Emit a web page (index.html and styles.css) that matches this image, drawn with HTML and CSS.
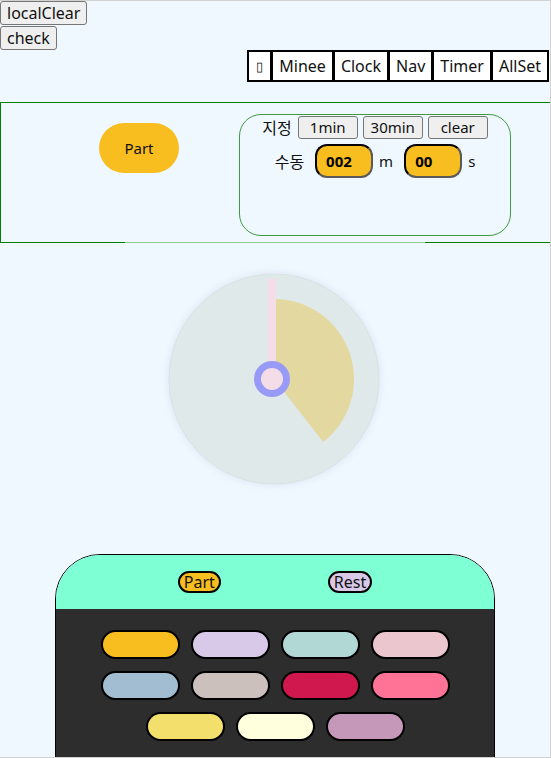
FILE: index.html
```html
<!DOCTYPE html>
<html lang="ko">
<head>
<meta charset="utf-8">
<title>Timer</title>
<link rel="stylesheet" href="styles.css">
</head>
<body>
<div class="frame">
  <div class="tools">
    <button class="btn">localClear</button>
    <button class="btn">check</button>
  </div>
  <nav class="nav">
    <span class="nav-item nav-box">&#9647;</span>
    <span class="nav-item">Minee</span>
    <span class="nav-item">Clock</span>
    <span class="nav-item">Nav</span>
    <span class="nav-item">Timer</span>
    <span class="nav-item">AllSet</span>
  </nav>
  <section class="zone">
    <div class="part-pill">Part</div>
    <div class="setbox">
      <div class="set-row">
        <span class="label">지정</span>
        <button class="btn small">1min</button>
        <button class="btn small">30min</button>
        <button class="btn small">clear</button>
      </div>
      <div class="set-row manual">
        <span class="label">수동</span>
        <span class="num">002</span>
        <span class="unit">m</span>
        <span class="num">00</span>
        <span class="unit">s</span>
      </div>
    </div>
  </section>
  <div class="clock-wrap">
    <svg class="clock" width="212" height="212" viewBox="-1 -1 212 212">
      <circle cx="105" cy="105" r="105" fill="#dfe9ea" stroke="#d6e2e6" stroke-width="1"/>
      <path d="M105,105 L105,25 A80,80 0 0 1 154.25,168.04 Z" fill="#e3d89f"/>
      <rect x="99" y="5" width="8" height="100" fill="#f4dde7"/>
      <circle cx="103" cy="105" r="18" fill="#989af8"/>
      <circle cx="103" cy="105" r="11" fill="#f4dde7"/>
    </svg>
  </div>
  <div class="panel">
    <div class="panel-head">
      <span class="tag tag-part">Part</span>
      <span class="tag tag-rest">Rest</span>
    </div>
    <div class="panel-body">
      <span class="swatch" style="background:#f8be1f"></span>
      <span class="swatch" style="background:#d9c9e9"></span>
      <span class="swatch" style="background:#b2d8d5"></span>
      <span class="swatch" style="background:#ebc6cf"></span>
      <span class="swatch" style="background:#a2bdd1"></span>
      <span class="swatch" style="background:#ccc0bc"></span>
      <span class="swatch" style="background:#d0184e"></span>
      <span class="swatch" style="background:#ff7496"></span>
      <span class="swatch" style="background:#f3df6c"></span>
      <span class="swatch" style="background:#fffedd"></span>
      <span class="swatch" style="background:#c598b9"></span>
    </div>
  </div>
</div>
</body>
</html>
```

FILE: styles.css
```css
html, body {
  margin: 0;
  padding: 0;
  background: #f0f8ff;
}
body {
  font-family: "Noto Sans", "Noto Sans CJK KR", sans-serif;
  font-size: 15px;
  color: #111;
}
.frame {
  width: 551px;
  height: 758px;
  box-sizing: border-box;
  border-top: 1px solid #d2d2d2;
  border-right: 1px solid #d2d2d2;
  border-bottom: 1px solid #d2d2d2;
  overflow: hidden;
}
.tools {
  display: flex;
  flex-direction: column;
  align-items: flex-start;
  gap: 1px;
}
.btn {
  font-family: "Noto Sans", "Noto Sans CJK KR", sans-serif;
  font-size: 16px;
  line-height: 20px;
  height: 24px;
  padding: 0 6px;
  background: #efefef;
  border: 1px solid #767676;
  border-radius: 3px;
  color: #111;
  margin: 0;
}
.nav {
  display: flex;
  width: max-content;
  margin-left: auto;
  margin-right: 1px;
  background: #000;
  padding: 2px;
  gap: 3px;
}
.nav-item {
  background: #fff;
  height: 28px;
  line-height: 28px;
  padding: 0 6px;
  font-size: 16px;
  color: #111;
}
.nav-box {
  font-size: 13px;
  padding: 0 7px;
}
.zone {
  margin-top: 20px;
  height: 141px;
  box-sizing: border-box;
  border: 1px solid #008000;
  border-right: none;
  display: flex;
  align-items: flex-start;
  padding: 11px 0 0 98px;
}
.part-pill {
  width: 80px;
  height: 50px;
  margin-top: 9px;
  border-radius: 25px;
  background: #f8be1f;
  display: flex;
  align-items: center;
  justify-content: center;
  font-size: 15px;
}
.setbox {
  margin-left: 60px;
  width: 272px;
  height: 122px;
  box-sizing: border-box;
  border: 1px solid #3e9a3e;
  border-radius: 22px;
  display: flex;
  flex-direction: column;
  align-items: center;
}
.set-row {
  display: flex;
  align-items: center;
  gap: 5px;
}
.set-row .label {
  font-size: 16px;
  margin-right: 1px;
}
.btn.small {
  height: 23px;
  width: 60px;
  padding: 0;
  font-size: 15px;
}
.manual {
  margin-top: 5px;
  gap: 0;
}
.manual .label {
  margin-right: 11px;
}
.num {
  width: 58px;
  height: 34px;
  box-sizing: border-box;
  border: 2px inset #5a5a5a;
  border-radius: 12px;
  background: #f8be1f;
  font-weight: bold;
  font-size: 15px;
  line-height: 30px;
  padding-left: 9px;
  color: #000;
}
.unit {
  margin: 0 11px 0 6px;
}
.unit:last-child { margin-right: 0; }
.clock-wrap {
  width: 300px;
  margin: -1px auto 0;
  padding-top: 31px;
  background: rgba(240, 248, 255, 0.6);
  display: flex;
  justify-content: center;
}
.clock {
  display: block;
  margin-left: -2px;
  filter: drop-shadow(0 0 4px rgba(200, 215, 230, 0.6));
}
.panel {
  width: 440px;
  margin: 69px auto 0;
  box-sizing: border-box;
  border: 1px solid #000;
  border-radius: 45px 45px 0 0;
  overflow: hidden;
}
.panel-head {
  height: 54px;
  background: #7fffd4;
  display: flex;
  justify-content: center;
  align-items: flex-start;
  gap: 107px;
  padding-top: 16px;
  box-sizing: border-box;
}
.tag {
  height: 22px;
  box-sizing: border-box;
  border: 2px solid #000;
  border-radius: 11px;
  padding: 0 4px;
  font-size: 16px;
  line-height: 18px;
}
.tag-part { background: #f8be1f; }
.tag-rest { background: #d9c9e9; }
.panel-body {
  background: #2d2d2d;
  height: 200px;
  display: flex;
  flex-wrap: wrap;
  justify-content: center;
  align-content: flex-start;
  gap: 12px 11px;
  padding: 21px 40px 0;
  box-sizing: border-box;
}
.swatch {
  width: 79px;
  height: 29px;
  box-sizing: border-box;
  border: 2.5px solid #000;
  border-radius: 15px;
}
```
